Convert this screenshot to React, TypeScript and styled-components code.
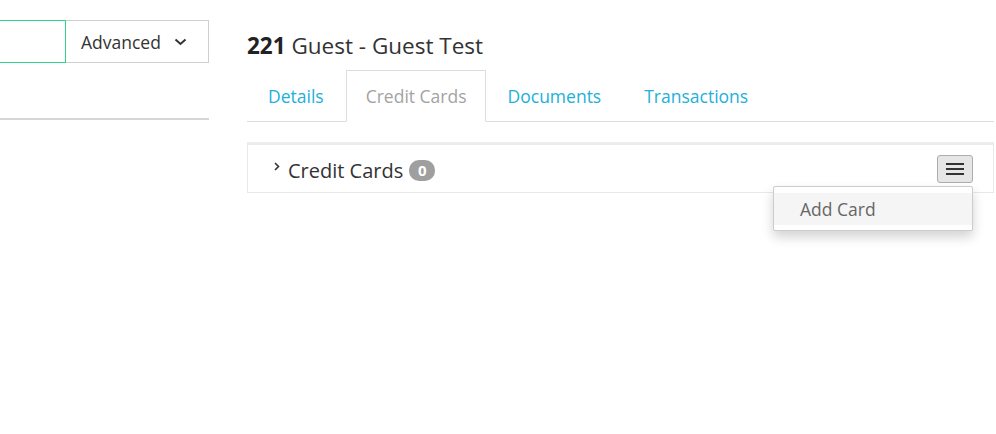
import React from "react";
import styled, { createGlobalStyle } from "styled-components";

const GlobalStyle = createGlobalStyle`
  html, body { margin: 0; padding: 0; background: #fff; }
  body { font-family: "Open Sans", "Liberation Sans", sans-serif; color: #333; }
  * { box-sizing: border-box; }
`;

const Page = styled.div`
  display: flex;
  gap: 38px;
  padding-top: 20px;
  width: 996px;
  height: 434px;
  overflow: hidden;
`;

const LeftCol = styled.div`
  width: 209px;
  flex: none;
  display: flex;
  flex-direction: column;
`;

const SearchRow = styled.div`
  display: flex;
  height: 43px;
`;

const SearchInput = styled.input`
  flex: 1;
  min-width: 0;
  height: 100%;
  border: 1px solid #2fd18f;
  border-left: none;
  outline: none;
  font: inherit;
  padding: 0;
`;

const AdvancedButton = styled.button`
  width: 143px;
  height: 100%;
  border: 1px solid #cfcfcf;
  border-left: none;
  background: #fff;
  font-family: "Open Sans", "Liberation Sans", sans-serif;
  font-size: 17.5px;
  color: #333;
  display: flex;
  align-items: center;
  padding: 0 0 0 15px;
  gap: 13px;
  svg { flex: none; }
`;

const Divider = styled.div`
  margin-top: 55px;
  height: 2px;
  background: #d6d6d6;
`;

const RightCol = styled.div`
  width: 747px;
  flex: none;
  display: flex;
  flex-direction: column;
`;

const Title = styled.h1`
  margin: 11px 0 0;
  font-size: 22.5px;
  line-height: 30px;
  font-weight: 400;
  color: #333;
  b { font-weight: 700; color: #222; }
`;

const Tabs = styled.ul`
  list-style: none;
  margin: 9px 0 0;
  padding: 0;
  display: flex;
  border-bottom: 1px solid #dddddd;
  height: 52px;
`;

const Tab = styled.li<{ $active?: boolean }>`
  height: 52px;
  padding: ${(p) => (p.$active ? "0 18px 0 19px" : "0 20px 0 20px")};
  display: flex;
  align-items: center;
  font-size: 17.5px;
  color: ${(p) => (p.$active ? "#a3a3a3" : "#22b0d8")};
  background: ${(p) => (p.$active ? "#fff" : "transparent")};
  border: 1px solid ${(p) => (p.$active ? "#dddddd" : "transparent")};
  border-bottom-color: ${(p) => (p.$active ? "#fff" : "transparent")};
  margin-bottom: -1px;
  & + & { margin-left: 1px; }
`;

const Panel = styled.div`
  margin-top: 20px;
  height: 51px;
  border: 1px solid #e8e8e8;
  border-top: 3px solid #ececec;
  display: flex;
  align-items: center;
  padding: 0 20px 0 26px;
  position: relative;
`;

const PanelTitle = styled.div`
  display: flex;
  align-items: center;
  font-size: 20px;
  color: #333;
  flex: 1;
  margin-top: 3px;
  svg { align-self: flex-start; margin-top: 5px; margin-right: 8px; }
`;

const Badge = styled.span`
  display: inline-flex;
  align-items: center;
  justify-content: center;
  margin-left: 6px;
  min-width: 26px;
  height: 21px;
  padding: 0 8px;
  border-radius: 10px;
  background: #9f9f9f;
  color: #fff;
  font-size: 15px;
  font-weight: 700;
  line-height: 1;
`;

const MenuWrap = styled.div`
  position: relative;
`;

const MenuButton = styled.button`
  width: 36px;
  height: 28px;
  border: 1px solid #adadad;
  border-radius: 3px;
  background: #e6e6e6;
  display: flex;
  align-items: center;
  justify-content: center;
  padding: 0;
`;

const Dropdown = styled.ul`
  position: absolute;
  top: 31px;
  right: 0;
  width: 200px;
  margin: 0;
  padding: 6px 0 5px;
  list-style: none;
  background: #fff;
  border: 1px solid #cccccc;
  border-radius: 2px;
  box-shadow: 0 6px 12px rgba(0, 0, 0, 0.175);
  z-index: 2;
`;

const DropdownItem = styled.li`
  height: 32px;
  display: flex;
  align-items: center;
  padding-left: 26px;
  background: #f5f5f5;
  color: #666;
  font-size: 17.5px;
`;

export default function App() {
  return (
    <>
      <GlobalStyle />
      <Page>
        <LeftCol>
          <SearchRow>
            <SearchInput aria-label="Search" />
            <AdvancedButton>
              Advanced
              <svg width="13" height="8" viewBox="0 0 13 8">
                <polyline points="1.5,1.5 6.5,6 11.5,1.5" fill="none" stroke="#333" strokeWidth="2" />
              </svg>
            </AdvancedButton>
          </SearchRow>
          <Divider />
        </LeftCol>
        <RightCol>
          <Title>
            <b>221</b> Guest - Guest Test
          </Title>
          <Tabs>
            <Tab>Details</Tab>
            <Tab $active>Credit Cards</Tab>
            <Tab>Documents</Tab>
            <Tab>Transactions</Tab>
          </Tabs>
          <Panel>
            <PanelTitle>
              <svg width="6" height="9" viewBox="0 0 6 9">
                <polyline points="1,1 4.5,4.5 1,8" fill="none" stroke="#333" strokeWidth="1.6" />
              </svg>
              Credit Cards
              <Badge>0</Badge>
            </PanelTitle>
            <MenuWrap>
              <MenuButton aria-label="Menu">
                <svg width="18" height="12" viewBox="0 0 18 12">
                  <rect x="0" y="0" width="18" height="2" fill="#333" />
                  <rect x="0" y="5" width="18" height="2" fill="#333" />
                  <rect x="0" y="10" width="18" height="2" fill="#333" />
                </svg>
              </MenuButton>
              <Dropdown>
                <DropdownItem>Add Card</DropdownItem>
              </Dropdown>
            </MenuWrap>
          </Panel>
        </RightCol>
      </Page>
    </>
  );
}
